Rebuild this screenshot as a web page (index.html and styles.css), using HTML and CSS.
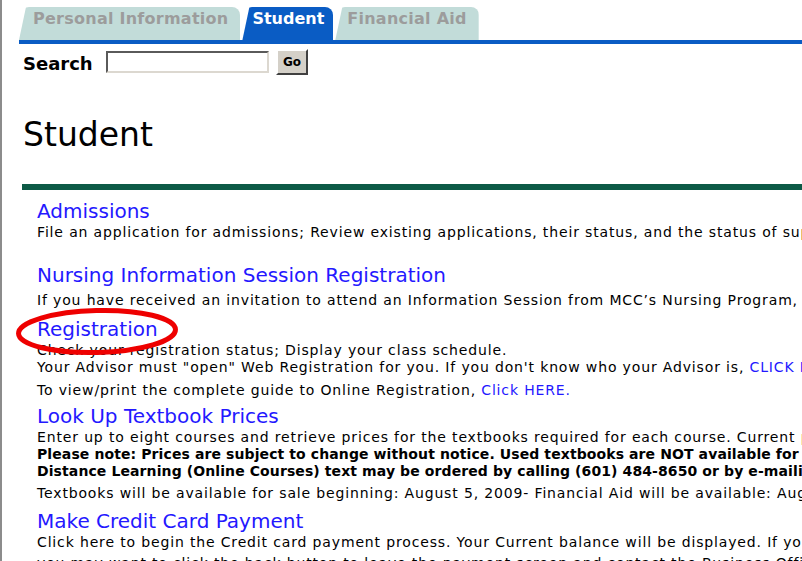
FILE: index.html
```html
<!DOCTYPE html>
<html lang="en">
<head>
<meta charset="utf-8">
<title>Student</title>
<link rel="stylesheet" href="styles.css">
</head>
<body>
<div class="page">
  <nav class="tabs">
    <a class="tab tab--first" href="#">Personal Information</a>
    <a class="tab tab--active" href="#">Student</a>
    <a class="tab" href="#">Financial Aid</a>
  </nav>

  <form class="search" action="#">
    <label class="search__label" for="q">Search</label>
    <input class="search__input" id="q" type="text">
    <button class="search__btn" type="button">Go</button>
  </form>

  <h1 class="title">Student</h1>
  <div class="rule"></div>

  <div class="menu">
    <div class="item item--first">
      <a class="item__link" href="#">Admissions</a>
      <p class="desc">File an application for admissions; Review existing applications, their status, and the status of supporting documents.</p>
    </div>

    <div class="item item--wide">
      <a class="item__link" href="#">Nursing Information Session Registration</a>
      <p class="desc desc--sep">If you have received an invitation to attend an Information Session from MCC’s Nursing Program, click here to register for a session.</p>
    </div>

    <div class="item item--loose">
      <a class="item__link" href="#">Registration</a>
      <p class="desc">Check your registration status; Display your class schedule.<br>Your Advisor must "open" Web Registration for you. If you don't know who your Advisor is, <a class="inline-link" href="#">CLICK HERE.</a></p>
      <p class="desc desc--sep6">To view/print the complete guide to Online Registration, <a class="inline-link" href="#">Click HERE.</a></p>
      <svg class="circle-mark" width="166" height="50" viewBox="0 0 166 50" aria-hidden="true">
        <ellipse cx="82" cy="24.5" rx="78.5" ry="21" fill="none" stroke="#ee0000" stroke-width="5" transform="rotate(-1.5 82 24.5)"/>
      </svg>
    </div>

    <div class="item item--tight">
      <a class="item__link" href="#">Look Up Textbook Prices</a>
      <p class="desc">Enter up to eight courses and retrieve prices for the textbooks required for each course. Current prices are shown for new and used books.<br><b>Please note: Prices are subject to change without notice. Used textbooks are NOT available for online purchase.</b><br><b>Distance Learning (Online Courses) text may be ordered by calling (601) 484-8650 or by e-mailing the bookstore.</b></p>
      <p class="desc desc--sep">Textbooks will be available for sale beginning: August 5, 2009- Financial Aid will be available: August 10, 2009</p>
    </div>

    <div class="item">
      <a class="item__link" href="#">Make Credit Card Payment</a>
      <p class="desc">Click here to begin the Credit card payment process. Your Current balance will be displayed. If you have any questions,</p>
      <p class="desc desc--sep4">you may want to click the back button to leave the payment screen and contact the Business Office.</p>
    </div>
  </div>
</div>
</body>
</html>
```

FILE: styles.css
```css
html, body {
  margin: 0;
  padding: 0;
  overflow: hidden;
  background: #ffffff;
}

body {
  border-left: 2px solid #8c8c8c;
  min-height: 100vh;
  font-family: "DejaVu Sans", Verdana, sans-serif;
  color: #000;
}

.page {
  padding-top: 7px;
}

/* ---------- tabs ---------- */
.tabs {
  display: flex;
  gap: 2px;
  margin-left: 17px;
  border-bottom: 4px solid #0a5cc4;
}

.tab {
  display: block;
  height: 33px;
  box-sizing: border-box;
  padding: 2px 12px 0 12px;
  font-weight: bold;
  font-size: 16px;
  line-height: 20px;
  letter-spacing: 0.25px;
  color: #9c9c9c;
  text-decoration: none;
  background: #c2dcd9;
  border-top-right-radius: 8px;
  border-top-left-radius: 10px;
  clip-path: polygon(0 100%, 7px 0, 100% 0, 100% 100%);
}

.tab--first {
  padding-left: 14px;
}

.tab--active {
  padding-left: 10px;
  padding-right: 9px;
  letter-spacing: 0;
  background: #0a5cc4;
  color: #ffffff;
}

/* ---------- search ---------- */
.search {
  display: flex;
  align-items: flex-start;
  margin: 5px 0 0 21px;
  height: 26px;
}

.search__label {
  margin-top: 4px;
  font-weight: bold;
  font-size: 18px;
  line-height: 22px;
  width: 83px;
}

.search__input {
  margin: 2px 0 0 0;
  width: 163px;
  height: 22px;
  box-sizing: border-box;
  padding: 0;
  border: 2px solid;
  border-color: #5a5a5a #dcd8d0 #dcd8d0 #5a5a5a;
  background: #fff;
}

.search__btn {
  margin-left: 7px;
  width: 32px;
  height: 26px;
  box-sizing: border-box;
  padding: 0;
  font-family: "DejaVu Sans", Verdana, sans-serif;
  font-weight: bold;
  font-size: 12px;
  color: #000;
  background: #d4d0c8;
  border: 2px solid;
  border-color: #ffffff #404040 #404040 #ffffff;
}

/* ---------- heading ---------- */
.title {
  margin: 41px 0 0 21px;
  font-weight: normal;
  font-size: 33px;
  line-height: 38px;
}

.rule {
  margin: 30px 0 0 20px;
  height: 6px;
  background: #0d5a46;
}

/* ---------- menu ---------- */
.menu {
  padding-left: 35px;
  white-space: nowrap;
}

.item {
  position: relative;
  margin-top: 7px;
}

.item--first { margin-top: 9px; }
.item--wide { margin-top: 22px; }
.item--loose { margin-top: 8px; }
.item--tight { margin-top: 5px; }

.item__link {
  display: block;
  font-size: 20px;
  line-height: 24px;
  color: #2418ff;
  text-decoration: none;
}

.desc {
  margin: 1px 0 0 0;
  font-size: 14px;
  line-height: 17px;
  letter-spacing: 0.85px;
}

.desc b {
  letter-spacing: 0.1px;
}

.desc--sep { margin-top: 5px; }
.desc--sep6 { margin-top: 6px; }
.desc--sep4 { margin-top: 4px; }

.inline-link {
  color: #2418ff;
  text-decoration: none;
}

.circle-mark {
  position: absolute;
  left: -22px;
  top: -10px;
  pointer-events: none;
}
```
